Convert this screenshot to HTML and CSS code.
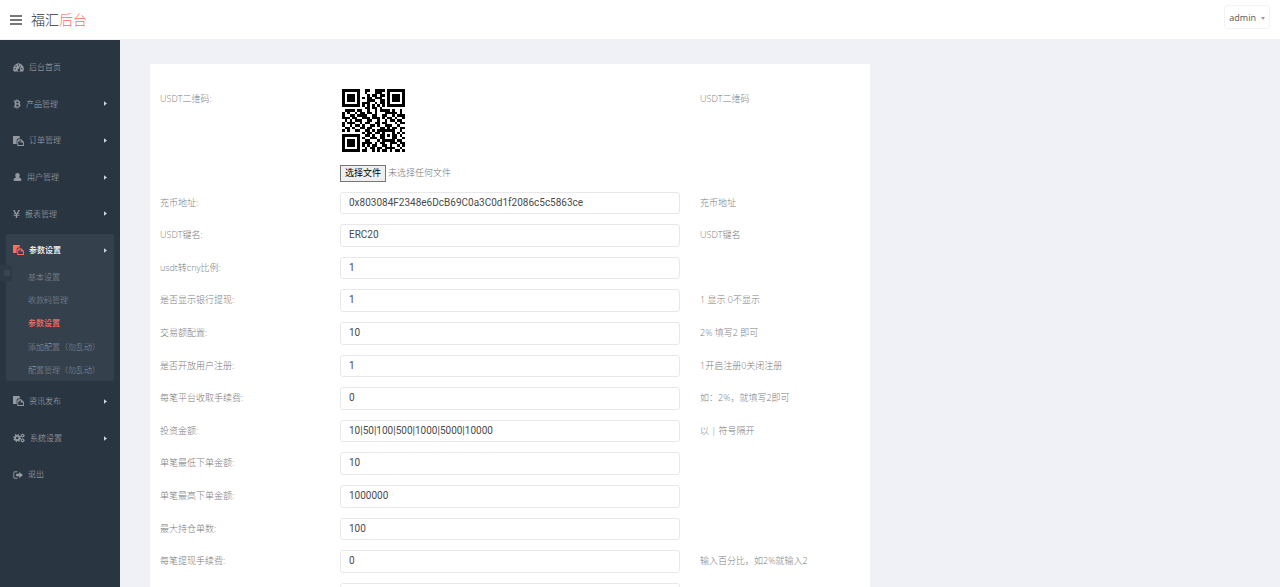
FILE: index.html
```html
<!DOCTYPE html>
<html lang="zh-CN">
<head>
<meta charset="utf-8">
<title>福汇后台</title>
<link rel="stylesheet" href="styles.css">
</head>
<body>
<svg class="defs" aria-hidden="true">
  <symbol id="i-dash" viewBox="0 0 18 16"><path fill-rule="evenodd" d="M9 2a9 9 0 0 0-7.500 13.500h15A9 9 0 0 0 9 2zM3.500 9.500a1.200 1.200 0 1 1 0 2.400 1.200 1.200 0 0 1 0-2.400zM5 5.500a1.200 1.200 0 1 1 0 2.400 1.200 1.200 0 0 1 0-2.400zM9 3.500a1.200 1.200 0 1 1 0 2.400 1.200 1.200 0 0 1 0-2.400zM14.500 9.500a1.200 1.200 0 1 1 0 2.400 1.200 1.200 0 0 1 0-2.400zM12 6l1 .4-2 5a2 2 0 1 1-1.500-.5z"/></symbol>
  <symbol id="i-btc" viewBox="0 0 14 16"><path fill-rule="evenodd" d="M1 2h4V0h1.500v2H8V0h1.500v2.200C12 2.600 13 4 12.500 5.800c-.2.900-.7 1.500-1.500 1.900 1.500.5 2.300 1.500 2 3.100-.3 2-1.600 2.900-3.500 3.100V16H8v-2H6.500v2H5v-2H1l.4-1.700H3V3.700H1zM5.800 3.800v3.100h1.700c1.300 0 2.200-.4 2.200-1.500s-.9-1.600-2.200-1.600zm0 4.900v3.500h2c1.500 0 2.400-.5 2.400-1.700S9.300 8.700 7.800 8.700z"/></symbol>
  <symbol id="i-paste" viewBox="0 0 18 16"><path d="M0 0h11v4H8L6 6v7H0z"/><path fill-rule="evenodd" d="M9 5h4.500L18 9.500V16H7V7zM12.500 6.500V10.500H16.500V14.600H8.500V9H11V6.500z"/></symbol>
  <symbol id="i-user" viewBox="0 0 16 16"><path d="M8 1a4 4 0 0 1 4 4c0 1.600-.8 3-1.800 3.700C13 9 15 10.500 15 13.500c0 1-.8 1.500-2 1.500H3c-1.200 0-2-.5-2-1.500 0-3 2-4.500 4.800-4.800C4.800 8 4 6.600 4 5a4 4 0 0 1 4-4z"/></symbol>
  <symbol id="i-yen" viewBox="0 0 12 16"><path d="M0 1h2.600L6 7l3.400-6H12L8.600 7H11v1.400H7.200v1.200H11V11H7.200v4H4.800v-4H1V9.600h3.800V8.400H1V7h2.400z"/></symbol>
  <symbol id="i-cogs" viewBox="0 0 20 16"><g fill="none" stroke="currentColor"><circle cx="7" cy="8" r="3.600" stroke-width="3.200"/><circle cx="7" cy="8" r="5.700" stroke-width="2" stroke-dasharray="2.200 2.280"/><circle cx="16" cy="4" r="1.900" stroke-width="1.800"/><circle cx="16" cy="4" r="3" stroke-width="1.200" stroke-dasharray="1.500 1.640"/><circle cx="16" cy="12" r="1.900" stroke-width="1.800"/><circle cx="16" cy="12" r="3" stroke-width="1.200" stroke-dasharray="1.500 1.640"/></g></symbol>
  <symbol id="i-out" viewBox="0 0 16 16"><path d="M7 2v1.500H3.500Q2 3.500 2 5v6q0 1.500 1.500 1.500H7V14H3.500Q.5 14 .5 11V5q0-3 3-3zM10 3l6 5-6 5v-3H5V6h5z"/></symbol>
  <symbol id="i-caret" viewBox="0 0 4 6"><path d="M0 0l4 3-4 3z"/></symbol>
</svg>

<header class="header">
  <button class="toggle" type="button" aria-label="菜单"><span></span><span></span><span></span></button>
  <a class="logo" href="#">福汇<span>后台</span></a>
  <button class="account" type="button">admin<span class="account-caret"></span></button>
</header>

<div class="layout">
  <aside class="sidebar">
    <button class="handle" type="button" aria-label="收起"></button>
    <ul class="menu">
      <li><a href="#"><svg class="icon w11"><use href="#i-dash"/></svg>后台首页</a></li>
      <li><a href="#"><svg class="icon w8"><use href="#i-btc"/></svg>产品管理<svg class="caret"><use href="#i-caret"/></svg></a></li>
      <li><a href="#"><svg class="icon w11"><use href="#i-paste"/></svg>订单管理<svg class="caret"><use href="#i-caret"/></svg></a></li>
      <li><a href="#"><svg class="icon w9"><use href="#i-user"/></svg>用户管理<svg class="caret"><use href="#i-caret"/></svg></a></li>
      <li><a href="#"><svg class="icon w7"><use href="#i-yen"/></svg>报表管理<svg class="caret"><use href="#i-caret"/></svg></a></li>
      <li class="open"><a href="#"><svg class="icon w11"><use href="#i-paste"/></svg>参数设置<svg class="caret"><use href="#i-caret"/></svg></a>
        <ul class="submenu">
          <li><a href="#">基本设置</a></li>
          <li><a href="#">收款码管理</a></li>
          <li><a class="current" href="#">参数设置</a></li>
          <li><a href="#">添加配置（勿乱动）</a></li>
          <li><a href="#">配置管理（勿乱动）</a></li>
        </ul>
      </li>
      <li><a href="#"><svg class="icon w11"><use href="#i-paste"/></svg>资讯发布<svg class="caret"><use href="#i-caret"/></svg></a></li>
      <li><a href="#"><svg class="icon w12"><use href="#i-cogs"/></svg>系统设置<svg class="caret"><use href="#i-caret"/></svg></a></li>
      <li><a href="#"><svg class="icon w10"><use href="#i-out"/></svg>退出</a></li>
    </ul>
  </aside>

  <main class="main">
    <form class="panel">
      <div class="row row-file">
        <label for="qr">USDT二维码:</label>
        <div class="field">
          <svg class="qr" id="qr-image" viewBox="0 0 25 25" role="img" aria-label="USDT二维码"></svg>
          <div class="file"><input id="qr" type="file"><span class="file-button">选择文件</span><span>未选择任何文件</span></div>
        </div>
        <p>USDT二维码</p>
      </div>
      <div class="row"><label for="f1">充币地址:</label><div class="field"><input id="f1" type="text" value="0x803084F2348e6DcB69C0a3C0d1f2086c5c5863ce"></div><p>充币地址</p></div>
      <div class="row"><label for="f2">USDT键名:</label><div class="field"><input id="f2" type="text" value="ERC20"></div><p>USDT键名</p></div>
      <div class="row"><label for="f3">usdt转cny比例:</label><div class="field"><input id="f3" type="text" value="1"></div></div>
      <div class="row"><label for="f4">是否显示银行提现:</label><div class="field"><input id="f4" type="text" value="1"></div><p>1 显示 0不显示</p></div>
      <div class="row"><label for="f5">交易额配置:</label><div class="field"><input id="f5" type="text" value="10"></div><p>2% 填写2 即可</p></div>
      <div class="row"><label for="f6">是否开放用户注册:</label><div class="field"><input id="f6" type="text" value="1"></div><p>1开启注册0关闭注册</p></div>
      <div class="row"><label for="f7">每笔平台收取手续费:</label><div class="field"><input id="f7" type="text" value="0"></div><p>如：2%，就填写2即可</p></div>
      <div class="row"><label for="f8">投资金额:</label><div class="field"><input id="f8" type="text" value="10|50|100|500|1000|5000|10000"></div><p>以 | 符号隔开</p></div>
      <div class="row"><label for="f9">单笔最低下单金额:</label><div class="field"><input id="f9" type="text" value="10"></div></div>
      <div class="row"><label for="f10">单笔最高下单金额:</label><div class="field"><input id="f10" type="text" value="1000000"></div></div>
      <div class="row"><label for="f11">最大持仓单数:</label><div class="field"><input id="f11" type="text" value="100"></div></div>
      <div class="row"><label for="f12">每笔提现手续费:</label><div class="field"><input id="f12" type="text" value="0"></div><p>输入百分比，如2%就输入2</p></div>
      <div class="row"><div></div><div class="field"><input type="text" aria-label="其他"></div></div>
    </form>
  </main>
</div>
<script src="qr.js"></script>
</body>
</html>
```
FILE: styles.css
```css
* { box-sizing: border-box; }
html, body { height: 100%; }
body {
  margin: 0;
  display: flex;
  flex-direction: column;
  overflow: hidden;
  background: #f0f1f7;
  color: #7c7c7c;
  font: 300 9px/1.4 "Open Sans", "Noto Sans CJK SC", sans-serif;
}
ul { margin: 0; padding: 0; list-style: none; }
p { margin: 0; }
a { color: inherit; text-decoration: none; }
button { font: inherit; padding: 0; }
.defs { display: none; }

.header {
  flex: none;
  display: flex;
  align-items: center;
  height: 40px;
  padding: 0 10px;
  background: #fff;
  border-bottom: 1px solid #f1f2f7;
}
.toggle {
  display: flex;
  flex-direction: column;
  gap: 2px;
  width: 12px;
  border: 0;
  background: none;
}
.toggle span { height: 2px; background: #777; }
.logo { margin-left: 9px; color: #2e2e2e; font-size: 14px; line-height: 20px; }
.logo span { color: #ff6c60; }
.account {
  display: flex;
  align-items: center;
  gap: 5px;
  height: 24px;
  margin: -5px 0 0 auto;
  padding: 2px 4px 0;
  border: 1px solid #f3f3f3;
  border-radius: 3px;
  background: #fff;
  color: #555;
  font-weight: 400;
}
.account-caret { border: 2px solid transparent; border-top: 3px solid #999; border-bottom: 0; }

.layout { flex: 1; display: flex; min-height: 0; }
.sidebar { position: relative; flex: none; width: 120px; background: #2a3542; color: #aeb2b7; }
.menu { padding-top: 9px; font-size: 8px; }
.menu > li { margin: 0 6px; padding: 2px 0; }
.menu > li > a {
  display: flex;
  align-items: center;
  padding: 3px 7px;
  line-height: 3.33;
}
.icon { flex: none; height: 10px; margin-right: 5px; fill: currentColor; opacity: .8; }
.w7 { width: 7px; }
.w8 { width: 8px; }
.w9 { width: 9px; }
.w10 { width: 10px; }
.w11 { width: 11px; }
.w12 { width: 12px; }
.caret { width: 3px; height: 5px; margin-left: auto; fill: #d0d3d7; }
.menu > .open { margin: 2px 6px; padding: 0; border-radius: 3px; background: #35404d; }
.open > a { color: #fff; font-weight: 500; }
.open > a .icon { color: #ff6c60; opacity: 1; }
.submenu { margin-top: -2px; padding-left: 22px; color: #8a939c; line-height: 2.91; white-space: nowrap; }
.submenu a { display: block; }
.submenu .current { color: #ff6c60; font-weight: 500; }
.handle {
  position: absolute;
  top: 225px;
  left: 0;
  width: 12px;
  height: 16px;
  border: 0;
  background: #2f3a47;
}
.handle::before { content: ""; display: block; width: 6px; height: 6px; margin-left: 4px; background: #3a4552; }

.main { flex: 1; padding: 24px 30px 0; }
.panel { max-width: 720px; padding: 20px 0; background: #fff; }
.row { display: grid; grid-template-columns: 1fr 2fr 1fr; margin-bottom: 10px; }
.row > * { padding: 0 10px; }
.row > label, .row > p { padding-top: 5px; }
.field input[type="text"] {
  display: block;
  width: 100%;
  margin: 0;
  padding: 4px 8px;
  border: 1px solid #e8e8ea;
  border-radius: 3px;
  background: #fff;
  color: #4a4a4a;
  font: 400 10px/1.26 Roboto, "Noto Sans CJK SC", sans-serif;
}
.row-file > label, .row-file > p { padding-top: 9px; }
.qr { display: block; width: 63px; height: 63px; margin: 5px 2px 13px; fill: #000; }
.file { position: relative; display: flex; align-items: center; gap: 2px; color: #777; font-weight: 300; }
.file input { position: absolute; inset: 0; width: 100%; opacity: 0; }
.file-button {
  padding: 1px 4px;
  border: 1px solid #767676;
  background: #efefef;
  color: #000;
  font-weight: 400;
}
```
FILE: qr.js
```js
const modules = [
  "1111111001100111101111111",
  "1000001001000111001000001",
  "1011101000101101101011101",
  "1011101010110111001011101",
  "1011101000111001101011101",
  "1000001011100101101000001",
  "1111111010101010101111111",
  "0000000001101101000000000",
  "0111101100100101111010010",
  "1010010110110100011111010",
  "1001101111001100110010111",
  "1110110011101110101101001",
  "0101011100110010010110110",
  "1011100101100110110001011",
  "1001011010011010011100100",
  "0110100110110001101011011",
  "1010011001101011111110010",
  "0000000010110110100010101",
  "1111111001101001101011010",
  "1000001010011101100011001",
  "1011101001100010111110110",
  "1011101011110101100111011",
  "1011101010101100110100101",
  "1000001001011011011110010",
  "1111111011001010110101101"
];
const path = document.createElementNS("http://www.w3.org/2000/svg", "path");
path.setAttribute("d", modules.map((line, y) =>
  [...line.matchAll(/1+/g)].map(run => `M${run.index} ${y}h${run[0].length}v1h-${run[0].length}z`).join("")
).join(""));
path.setAttribute("shape-rendering", "crispEdges");
document.getElementById("qr-image").append(path);
```
